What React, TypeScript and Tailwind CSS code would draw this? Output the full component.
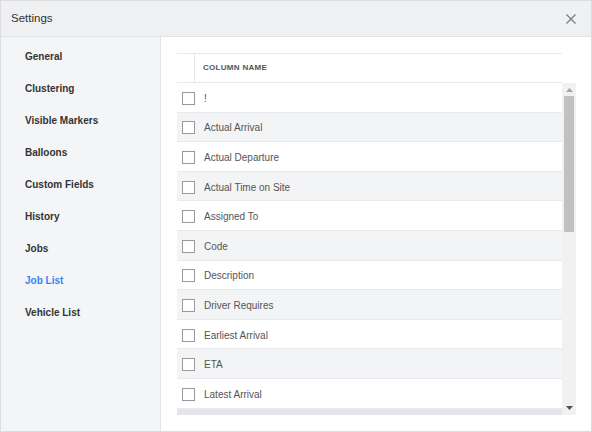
import React from "react";

const nav = [
  "General",
  "Clustering",
  "Visible Markers",
  "Balloons",
  "Custom Fields",
  "History",
  "Jobs",
  "Job List",
  "Vehicle List",
];

const rows = [
  "!",
  "Actual Arrival",
  "Actual Departure",
  "Actual Time on Site",
  "Assigned To",
  "Code",
  "Description",
  "Driver Requires",
  "Earliest Arrival",
  "ETA",
  "Latest Arrival",
];

export default function App() {
  return (
    <div
      className="w-[592px] h-[432px] flex flex-col border border-[#dcdde1] bg-white overflow-hidden"
      style={{ fontFamily: '"Liberation Sans", Arial, sans-serif' }}
    >
      <div className="h-[36px] shrink-0 flex items-center justify-between bg-[#eff0f2] border-b border-[#e2e3e6] pl-[10px] pr-[15px]">
        <span className="text-[11.5px] text-[#333]">Settings</span>
        <svg width="10" height="10" viewBox="0 0 10 10" className="mt-[1px]">
          <path d="M0.5 0.5 L9.5 9.5 M9.5 0.5 L0.5 9.5" stroke="#6f7b88" strokeWidth="1.2" fill="none" />
        </svg>
      </div>
      <div className="flex flex-1 min-h-0">
        <div className="w-[160px] shrink-0 bg-[#f4f5f7] border-r border-[#e3e4e7] pt-[3px]">
          {nav.map((n) => (
            <div
              key={n}
              className={
                "h-[32px] flex items-center pl-[24px] text-[10px] font-bold " +
                (n === "Job List" ? "text-[#3b82f6]" : "text-[#333]")
              }
            >
              {n}
            </div>
          ))}
        </div>
        <div className="flex-1 pt-[16px] pl-[16px] pr-[15px]">
          <div className="w-[385px] h-[30px] flex border-t border-b border-[#e8e9ec]">
            <div className="w-[18px] border-r border-[#e8e9ec]" />
            <div className="flex items-center pl-[8px] text-[8px] font-bold tracking-[0.3px] text-[#555]">
              COLUMN NAME
            </div>
          </div>
          <div className="flex h-[332px]">
            <div className="w-[385px] flex flex-col overflow-hidden">
              {rows.map((r, i) => (
                <div
                  key={r}
                  className={
                    "h-[29.6px] shrink-0 flex items-center pt-[2px] border-b border-[#e8e9ec] " +
                    (i % 2 === 1 ? "bg-[#f3f4f6]" : "bg-white")
                  }
                >
                  <div className="w-[13px] h-[13px] ml-[5px] border border-[#9a9a9a] bg-white" />
                  <span className="ml-[9px] text-[10px] text-[#555]">{r}</span>
                </div>
              ))}
              <div className="h-[6px] shrink-0 bg-[#e4e5e9]" />
            </div>
            <div className="w-[14px] h-[332px] bg-[#f1f1f1] flex flex-col items-center">
              <div className="h-[13px] w-full flex items-center justify-center">
                <svg width="7" height="4" viewBox="0 0 7 4">
                  <path d="M3.5 0 L7 4 L0 4 Z" fill="#a3a3a3" />
                </svg>
              </div>
              <div className="w-[10px] h-[136px] bg-[#c1c1c1]" />
              <div className="flex-1" />
              <div className="h-[14px] w-full flex items-center justify-center">
                <svg width="7" height="4" viewBox="0 0 7 4">
                  <path d="M0 0 L7 0 L3.5 4 Z" fill="#505050" />
                </svg>
              </div>
            </div>
          </div>
        </div>
      </div>
    </div>
  );
}
